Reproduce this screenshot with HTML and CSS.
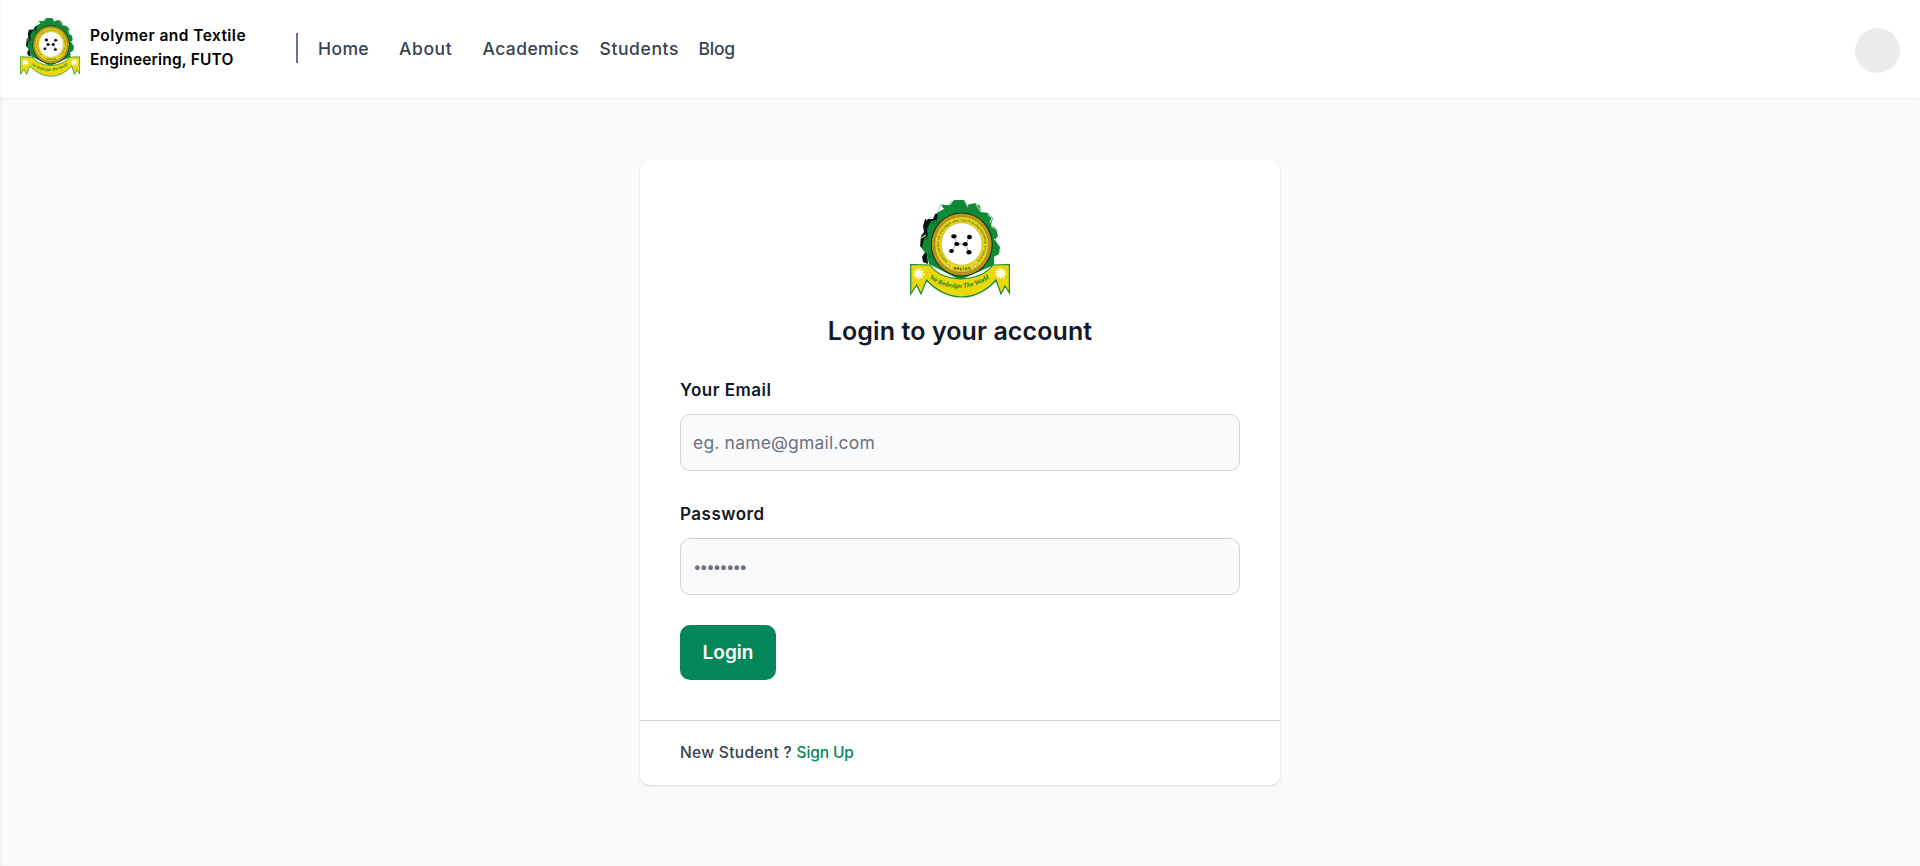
FILE: index.html
```html
<!DOCTYPE html>
<html lang="en">
<head>
<meta charset="utf-8">
<title>Login</title>
<link rel="stylesheet" href="styles.css">
</head>
<body>
<svg class="defs" width="0" height="0" aria-hidden="true">
  <defs>
    <path id="ring-top" d="M37.2 61.2A22.6 22.6 0 1 1 66.2 61.2"/>
    <path id="ring-bottom" d="M38.5 67.5Q51.7 73.5 65.5 67.5"/>
    <path id="motto" d="M19 78Q30 87.5 50 88Q70 87 82 76"/>
    <symbol id="crest" viewBox="0 0 100 98">
      <path fill="#07180c" d="M23 19L25 14L31 12L32 18L27 23L20 32L21 37L17 51L18 64L13 62L12 57L15 52L10 46L11 36L14 32L13 26L15 19Z"/>
      <path fill="#118a36" d="M40 5L44 0H54L57 5L65 3L70 6L71 12L78 13L83 18L81 25L86 28L88 36L85 40L90 47L89 54L84 57L84 65L50 80L19 64L17 55L12 48L14 39L18 36L17 29L21 21L27 20L28 12L34 9L31 5Z"/>
      <path fill="none" stroke="#0b5d25" stroke-width=".8" d="M20 22L26 24L28 20M14 40L19 38M18 55L22 58"/>
      <path fill="none" stroke="#b9dfc2" stroke-width="1.2" d="M16 20L21 17M27 13L30 5L34 4M38 5L42 1M55 1L58 7M66 4L71 12M78 14L82 18L80 23M81 26L86 29M11 38L16 35M84 39L87 41"/>
      <path fill="#e8da0a" stroke="#178a38" stroke-width="1.2" d="M.7 64.5L20 65Q29 78 51 79Q73 78 83 65L99.4 64.5V93L95 86L91 94L86 80Q71 97 51 97Q31 96 16.5 80L11 94L6.7 85L.7 94Z"/>
      <ellipse cx="51.7" cy="44.5" rx="31" ry="32" fill="#0b321a"/>
      <ellipse cx="51.7" cy="44.5" rx="30" ry="31" fill="#b9931d"/>
      <ellipse cx="51.7" cy="44.5" rx="26.8" ry="27.8" fill="#e6d91a" stroke="#93751a" stroke-width=".5"/>
      <ellipse cx="51.7" cy="44" rx="20.4" ry="21.2" fill="#fff" stroke="#a89a25" stroke-width=".5"/>
      <text class="crest-ring"><textPath href="#ring-top" textLength="109">ASSOCIATION OF POLYMER AND TEXTILE ENGINEERING STUDENTS</textPath></text>
      <text class="crest-name"><textPath href="#ring-bottom" startOffset="50%" text-anchor="middle" textLength="18">APSTES</textPath></text>
      <g fill="#eee9bc" stroke="#8d7b22" stroke-width=".4"><circle cx="38.2" cy="66" r="1.5"/><circle cx="65.5" cy="66" r="1.5"/></g>
      <text class="crest-motto"><textPath href="#motto" textLength="65">We Redesign The World</textPath></text>
      <path stroke="#888" stroke-width=".8" fill="none" d="M44 36.2L46.8 44L41.5 51M59.5 37L55.3 44.2L59 52M46.8 44H55.3"/>
      <g fill="#000"><ellipse cx="44" cy="36.3" rx="2.7" ry="2.1"/><ellipse cx="59.5" cy="37" rx="2.5" ry="2.2"/><ellipse cx="46.8" cy="44" rx="2.6" ry="2.1"/><ellipse cx="55.3" cy="44.2" rx="2.5" ry="2.1"/><ellipse cx="41.5" cy="51" rx="2.4" ry="2.1"/><ellipse cx="59" cy="52.3" rx="2.6" ry="2.2"/></g>
      <g fill="#fffef0"><circle cx="8.8" cy="74" r="3.7"/><circle cx="90.6" cy="73.5" r="3.8"/></g>
      <g fill="none" stroke="#fffef0" stroke-width="2" stroke-dasharray="1.5 1.5"><circle cx="8.8" cy="74" r="4.5"/><circle cx="90.6" cy="73.5" r="4.5"/></g>
    </symbol>
  </defs>
</svg>
<header class="header">
  <a class="brand">
    <svg class="brand-logo" viewBox="0 0 100 98"><use href="#crest"/></svg>
    <span class="brand-name"><span class="brand-line1">Polymer and Textile</span><br><span class="brand-line2">Engineering, FUTO</span></span>
  </a>
  <span class="separator"></span>
  <nav class="nav">
    <a>Home</a><a class="nav-about">About</a><a>Academics</a><a class="nav-students">Students</a><a class="nav-blog">Blog</a>
  </nav>
  <span class="avatar"></span>
</header>
<main class="main">
  <section class="card">
    <form class="form">
      <svg class="card-logo" viewBox="0 0 100 98"><use href="#crest"/></svg>
      <h1 class="title">Login to your account</h1>
      <label class="label" for="email">Your Email</label>
      <input class="input" id="email" type="email" placeholder="eg. name@gmail.com">
      <label class="label" for="password">Password</label>
      <input class="input input-password" id="password" type="password" placeholder="••••••••">
      <button class="button" type="button">Login</button>
    </form>
    <p class="card-footer">New Student ? <a class="signup">Sign Up</a></p>
  </section>
</main>
</body>
</html>
```
FILE: styles.css
```css
* { box-sizing: border-box; }
body {
  margin: 0;
  min-height: 866px;
  background: #f9fafc;
  box-shadow: inset 2px 0 2px rgba(0, 0, 0, .04);
  font-family: Inter, "Liberation Sans", sans-serif;
  color: #111827;
}
.defs { position: absolute; }
.header {
  display: flex;
  align-items: center;
  height: 98px;
  padding: 0 20px;
  background: #fff;
  box-shadow: 0 1px 2px rgba(0, 0, 0, .07), inset 2px 0 1px rgba(0, 0, 0, .03);
}
.brand { display: flex; align-items: center; gap: 10px; width: 276px; margin-bottom: 2px; }
.brand-logo { width: 60px; height: 59px; margin-bottom: 2px; }
.brand-name { font-size: 15.5px; font-weight: 600; line-height: 24px; color: #000; white-space: nowrap; }
.brand-line1 { letter-spacing: .45px; }
.brand-line2 { letter-spacing: .17px; }
.separator { width: 2px; height: 30px; margin-bottom: 2px; background: #64748b; }
.nav {
  display: grid;
  grid-template-columns: 81px 83.5px 117px 99px auto;
  margin-left: 20px;
  font-size: 17.5px;
  font-weight: 500;
  line-height: 28px;
  letter-spacing: .4px;
  color: #374151;
}
.nav-about { letter-spacing: .6px; }
.nav-students { letter-spacing: .6px; }
.nav-blog { letter-spacing: -.2px; }
.avatar { width: 45px; height: 45px; margin: 3px 0 0 auto; border-radius: 50%; background: #ebebeb; }
.main { display: flex; justify-content: center; padding-top: 62px; }
.card {
  width: 640px;
  height: 625px;
  background: #fff;
  border-radius: 10px;
  box-shadow: 0 1px 3px rgba(0, 0, 0, .1), 0 1px 2px rgba(0, 0, 0, .06);
}
.form { display: flex; flex-direction: column; height: 560px; padding: 40px; }
.card-logo { width: 100px; height: 98px; align-self: center; }
.title { margin: 15px 0 29px; font-size: 25px; font-weight: 600; line-height: 36px; letter-spacing: .1px; text-align: center; }
.label { margin-bottom: 12px; font-size: 17px; font-weight: 600; line-height: 24px; letter-spacing: .5px; }
.input {
  width: 100%;
  height: 57px;
  margin-bottom: 31px;
  padding: 0 12px;
  border: 1px solid #d1d5db;
  border-radius: 10px;
  background: #f9fafb;
  font: 400 17.5px Inter, sans-serif;
  letter-spacing: .18px;
}
.input::placeholder { color: #6b7280; }
.input-password { margin-bottom: 30px; padding-bottom: 2px; }
.input-password::placeholder { font-size: 15px; letter-spacing: -1.85px; }
.button {
  width: 96px;
  height: 55px;
  border: 0;
  border-radius: 10px;
  background: #058859;
  color: #fff;
  font: 600 19px Inter, sans-serif;
}
.card-footer {
  margin: 0;
  padding: 19px 40px 0;
  border-top: 1px solid #d1d5db;
  font-size: 15.5px;
  font-weight: 500;
  line-height: 25px;
  letter-spacing: .33px;
  color: #374151;
}
.signup { letter-spacing: -.1px; color: #058859; }
.crest-ring { font: 700 3px "Liberation Sans", sans-serif; fill: #55591a; }
.crest-name { font: 700 4px "Liberation Sans", sans-serif; fill: #272a0c; }
.crest-motto { font: italic 700 7px "Liberation Serif", serif; fill: #28852b; }
```
